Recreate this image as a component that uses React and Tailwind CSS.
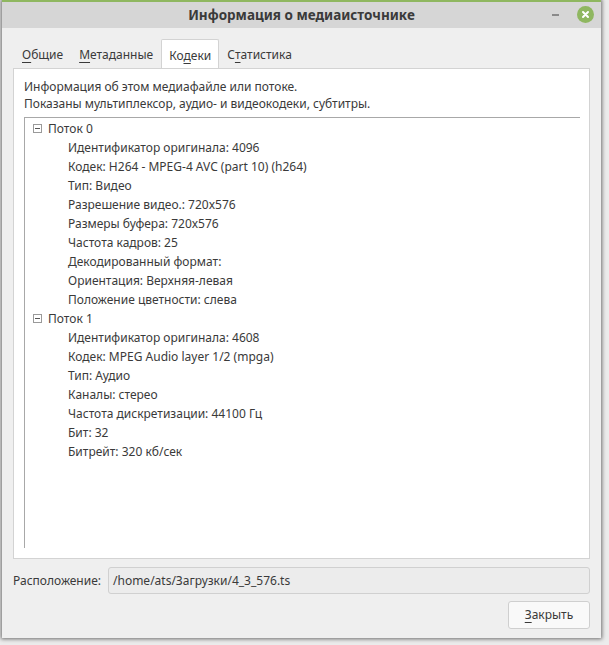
import React from "react";

// ─── Data ─────────────────────────────────────────────────────────────────────

const STREAMS = [
  {
    name: "Поток 0",
    props: [
      "Идентификатор оригинала: 4096",
      "Кодек: H264 - MPEG-4 AVC (part 10) (h264)",
      "Тип: Видео",
      "Разрешение видео.: 720x576",
      "Размеры буфера: 720x576",
      "Частота кадров: 25",
      "Декодированный формат:",
      "Ориентация: Верхняя-левая",
      "Положение цветности: слева",
    ],
  },
  {
    name: "Поток 1",
    props: [
      "Идентификатор оригинала: 4608",
      "Кодек: MPEG Audio layer 1/2 (mpga)",
      "Тип: Аудио",
      "Каналы: стерео",
      "Частота дискретизации: 44100 Гц",
      "Бит: 32",
      "Битрейт: 320 кб/сек",
    ],
  },
];

const FONT = { fontFamily: '"Noto Sans", "Open Sans", sans-serif' };

// ─── Sub-components ───────────────────────────────────────────────────────────

const Mnemonic = ({ before = "", letter, after = "" }) => (
  <span>
    {before}
    <span className="underline underline-offset-[3px] decoration-[1px]">{letter}</span>
    {after}
  </span>
);

const Tab = ({ active, children }) => (
  <div
    className={
      active
        ? "h-[29px] px-[7px] pt-[3px] flex items-center bg-white border border-b-0 border-[#d3d3d3] rounded-t-[2px] -mb-px relative z-10"
        : "h-[29px] px-[8px] pt-[3px] flex items-center"
    }
  >
    {children}
  </div>
);

const Expander = () => (
  <span className="w-[9px] h-[9px] border border-[#9a9a9a] flex items-center justify-center bg-white">
    <span className="w-[5px] h-px bg-[#555]" />
  </span>
);

const StreamNode = ({ stream }) => (
  <div>
    <div className="h-[19px] flex items-center pl-[8px] gap-[6px]">
      <Expander />
      <span>{stream.name}</span>
    </div>
    {stream.props.map((p) => (
      <div key={p} className="h-[19px] flex items-center pl-[43px]">
        {p}
      </div>
    ))}
  </div>
);

// ─── Main Component ───────────────────────────────────────────────────────────

export default function App() {
  return (
    <div className="w-[609px] h-[645px] bg-[#ececec] overflow-hidden" style={FONT}>
      <div className="ml-[2px] w-[599px] h-[638px] flex flex-col bg-[#efefef] text-[12px] text-[#3a3a3a] shadow-[0_0_4px_1px_rgba(0,0,0,0.55)]">
        {/* title bar */}
        <div className="h-[28px] shrink-0 bg-[#d6d6d6] border-t-2 border-[#8fb760] flex items-center relative">
          <div className="flex-1 text-center font-bold text-[13.5px] text-[#3a3a3a]">
            Информация о медиаисточнике
          </div>
          <span className="absolute left-[550px] top-[12px] w-[7px] h-[2px] bg-[#8a8a8a]" />
          <span className="absolute left-[575px] top-[4px] w-[17px] h-[17px] rounded-full bg-[#8fb760] flex items-center justify-center">
            <svg width="9" height="9" viewBox="0 0 9 9">
              <path d="M2 2 L7 7 M7 2 L2 7" stroke="#fff" strokeWidth="2" strokeLinecap="round" />
            </svg>
          </span>
        </div>

        {/* tabs */}
        <div className="flex pt-[11px] pl-[12px]">
          <Tab><Mnemonic letter="О" after="бщие" /></Tab>
          <Tab><Mnemonic letter="М" after="етаданные" /></Tab>
          <Tab active><Mnemonic before="Ко" letter="д" after="еки" /></Tab>
          <Tab><Mnemonic before="С" letter="т" after="атистика" /></Tab>
        </div>

        {/* page */}
        <div className="mx-[11px] h-[491px] bg-white border border-[#d3d3d3] flex flex-col pt-[9px] pb-[10px] pl-[10px] pr-[9px]">
          <div className="leading-[17px]">
            <div>Информация об этом медиафайле или потоке.</div>
            <div>Показаны мультиплексор, аудио- и видеокодеки, субтитры.</div>
          </div>
          <div className="mt-[5px] flex-1 border-t border-l border-[#a8a8a8] pt-[1px]">
            {STREAMS.map((s) => (
              <StreamNode key={s.name} stream={s} />
            ))}
          </div>
        </div>

        {/* location */}
        <div className="mt-[8px] mx-[11px] flex items-center h-[27px]">
          <span className="w-[95px] shrink-0">Расположение:</span>
          <div className="flex-1 h-full bg-[#ececec] border border-[#d0d0d0] rounded-[3px] flex items-center px-[4px]">
            /home/ats/Загрузки/4_3_576.ts
          </div>
        </div>

        {/* actions */}
        <div className="mt-[7px] mx-[11px] flex justify-end">
          <button className="w-[82px] h-[28px] bg-[#f9f9f9] border border-[#cfcfcf] rounded-[3px] text-[#3a3a3a]">
            <Mnemonic letter="З" after="акрыть" />
          </button>
        </div>
      </div>
    </div>
  );
}
